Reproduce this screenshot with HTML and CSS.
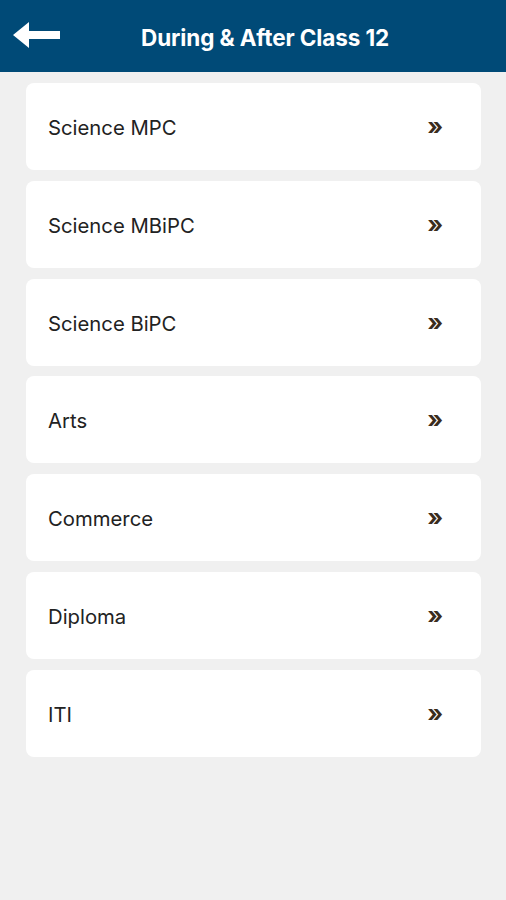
FILE: index.html
```html
<!DOCTYPE html>
<html lang="en">
<head>
    <meta charset="UTF-8">
    <meta name="viewport" content="width=device-width, initial-scale=1.0">
    <title>During &amp; After Class 12</title>
    <link rel="stylesheet" href="styles.css">
</head>
<body>
    <header class="top-bar">
        <a class="back-button" href="#">
            <svg width="48" height="28" viewBox="0 0 48 28">
                <path d="M0 14 L16 1 L16 10 L47 10 L47 18 L16 18 L16 27 Z" fill="#ffffff"/>
            </svg>
        </a>
        <h1 class="top-title">During &amp; After Class 12</h1>
    </header>
    <main class="stream-list">
        <a class="stream-card" href="#"><span>Science MPC</span><b class="more">&raquo;</b></a>
        <a class="stream-card" href="#"><span>Science MBiPC</span><b class="more">&raquo;</b></a>
        <a class="stream-card" href="#"><span>Science BiPC</span><b class="more">&raquo;</b></a>
        <a class="stream-card" href="#"><span>Arts</span><b class="more">&raquo;</b></a>
        <a class="stream-card" href="#"><span>Commerce</span><b class="more">&raquo;</b></a>
        <a class="stream-card" href="#"><span>Diploma</span><b class="more">&raquo;</b></a>
        <a class="stream-card" href="#"><span>ITI</span><b class="more">&raquo;</b></a>
    </main>
</body>
</html>
```

FILE: styles.css
```css
body {
    margin: 0;
    background-color: #f0f0f0;
    font-family: Inter, 'Liberation Sans', sans-serif;
    height: 900px;
}
.top-bar {
    background-color: #004a77;
    height: 72px;
    display: flex;
    align-items: center;
    padding-left: 13px;
}
.back-button {
    display: flex;
    width: 48px;
    height: 28px;
    margin-top: -2px;
}
.top-title {
    margin: 3px 0 0 80px;
    color: #ffffff;
    font-size: 22.5px;
    font-weight: 700;
    letter-spacing: -0.1px;
}
.stream-list {
    display: flex;
    flex-direction: column;
    gap: 10.8px;
    padding: 11px 25px 0 26px;
}
.stream-card {
    display: flex;
    align-items: center;
    justify-content: space-between;
    height: 87px;
    background-color: #ffffff;
    border-radius: 8px;
    padding: 0 38px 0 22px;
    text-decoration: none;
    color: #222222;
    font-size: 20.3px;
}
.stream-card span {
    margin-top: 2px;
}
.more {
    color: #3a2c1c;
    font-size: 24px;
    font-weight: 700;
    margin-top: 0;
}
```
